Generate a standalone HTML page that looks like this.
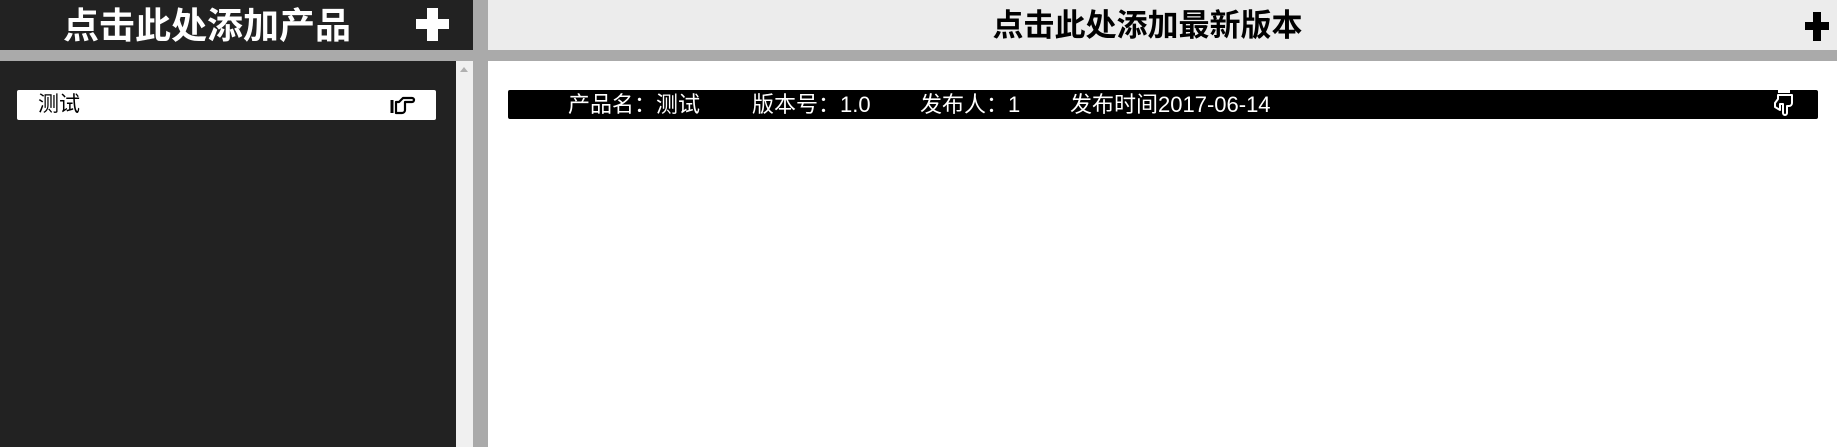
<!DOCTYPE html>
<html><head><meta charset="utf-8"><style>
body{margin:0;width:1837px;height:447px;position:relative;overflow:hidden;background:#fff;font-family:"Liberation Sans","Noto Sans CJK SC",sans-serif}
div{position:absolute;box-sizing:border-box}
.s{position:absolute;white-space:nowrap;top:0;line-height:29px}
</style></head><body>
<div style="left:0;top:0;width:473px;height:447px;background:#222"></div>
<div style="left:473px;top:0;width:15px;height:447px;background:#aaa"></div>
<div style="left:488px;top:0;width:1349px;height:50px;background:#ececec"></div>
<div style="left:0;top:50px;width:1837px;height:11px;background:#aaa"></div>
<div style="left:456px;top:61px;width:17px;height:386px;background:#f0f0f0"></div>
<div style="left:460px;top:67px;width:0;height:0;border-left:4px solid transparent;border-right:4px solid transparent;border-bottom:5px solid #b0b0b0"></div>
<div style="left:63px;top:1px;font-size:36px;font-weight:bold;color:#fff;line-height:50px;white-space:nowrap">点击此处添加产品</div>
<div style="left:416px;top:19px;width:33px;height:10px;background:#fff"></div>
<div style="left:427px;top:8px;width:11px;height:33px;background:#fff"></div>
<div style="left:488px;top:4px;width:1349px;text-align:center;font-size:31px;font-weight:bold;color:#000;line-height:44px;padding-right:30px">点击此处添加最新版本</div>
<div style="left:1805px;top:22px;width:24px;height:8px;background:#000"></div>
<div style="left:1813px;top:12px;width:8px;height:29px;background:#000"></div>
<div style="left:17px;top:90px;width:419px;height:30px;background:#fff;border-radius:2px">
<span class="s" style="left:21px;font-size:21px;color:#000">测试</span>
<svg style="position:absolute;left:373px;top:5px" width="26" height="20" viewBox="0 0 26 20"><rect x="0.5" y="5" width="3" height="13" fill="#000"/><path d="M6 7 h3 l4-4 h9 a2 2 0 0 1 0 4 h-7 v8 a3 3 0 0 1-3 3 h-6 z" fill="none" stroke="#000" stroke-width="2.2" stroke-linejoin="round"/></svg></div>
<div style="left:508px;top:90px;width:1310px;height:29px;background:#000;border-radius:2px;color:#fff;font-size:22px">
<span class="s" style="left:60px">产品名：测试</span>
<span class="s" style="left:244px">版本号：1.0</span>
<span class="s" style="left:412px">发布人：1</span>
<span class="s" style="left:562px">发布时间2017-06-14</span>
<svg style="position:absolute;left:1265px;top:0" width="22" height="26" viewBox="0 0 22 26"><rect x="5" y="0" width="12" height="3" fill="#fff"/><path d="M5 5 v4 l-3 4 v4 l5 3 v-6 h3 v9 a2 2 0 0 0 4 0 v-7 h2 a3 3 0 0 0 3-3 v-8 z" fill="none" stroke="#fff" stroke-width="2" stroke-linejoin="round"/></svg></div>
</body></html>
